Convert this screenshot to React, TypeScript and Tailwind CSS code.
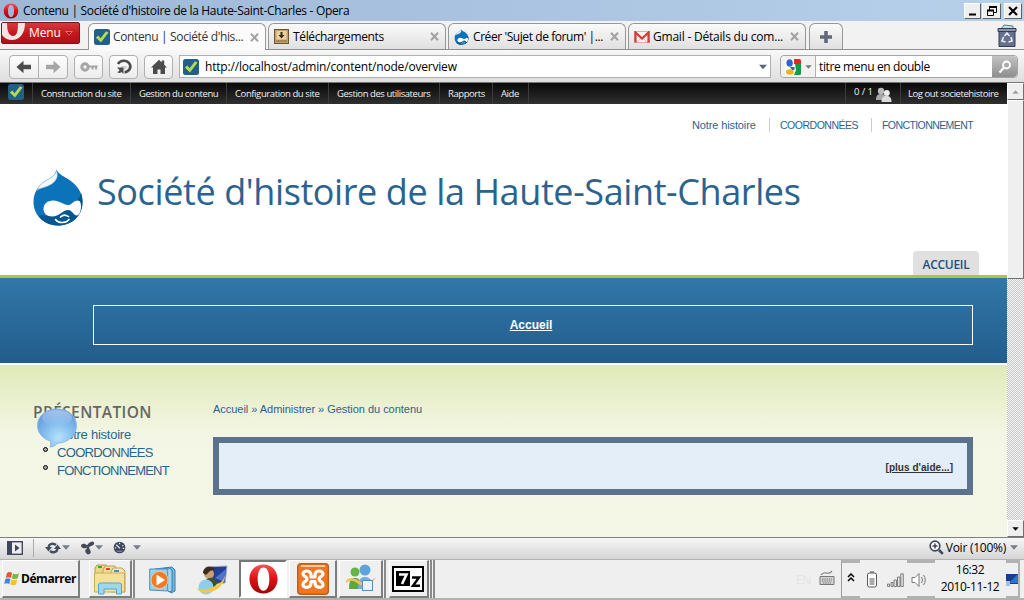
import React from 'react';

type IconProps = { className?: string };

const ui = "font-['Open_Sans','Noto_Sans',sans-serif]";
const arial = "font-['Liberation_Sans',Arial,sans-serif]";

function OperaLogo({ className }: IconProps) {
  return (
    <svg viewBox="0 0 32 32" className={className}>
      <defs>
        <linearGradient id="opera" x1="0" y1="0" x2="0" y2="1">
          <stop offset="0" stopColor="#f0564f" />
          <stop offset=".5" stopColor="#e00f14" />
          <stop offset="1" stopColor="#9c0508" />
        </linearGradient>
      </defs>
      <path
        fillRule="evenodd"
        fill="url(#opera)"
        d="M16 1C7 1 1.500 8 1.500 16S7 31 16 31s14.500-7 14.500-15S25 1 16 1Zm0 3c4 0 6 5 6 12s-2 12-6 12-6-5-6-12 2-12 6-12Z"
      />
    </svg>
  );
}

function CheckIcon({ className }: IconProps) {
  return (
    <svg viewBox="0 0 16 16" className={className}>
      <rect width="16" height="16" rx="2.500" fill="#225f8b" />
      <path d="M1.800 8.500 4.400 6.500l2.200 2.700L12 2.200l2.600 1.200L7 13.500Z" fill="#b2dc4c" />
    </svg>
  );
}

function DrupalDrop({ className }: IconProps) {
  return (
    <svg viewBox="0 0 50 57" className={className}>
      <path
        d="M23.500.5c2.500 5.500 8 7 13 10.500C45 17 49.500 24 49.500 33 49.500 47 39 56.500 25 56.500S.5 46 .5 33C.5 23 6 15.500 14 11c5-3 9-5.500 9.500-10.500Z"
        fill="#0a73ba"
      />
      <path d="M48 24c-1 5-5 9-11 11.500L22 45c-4 3-9 2-13 1l-3 1c4 6 11 9.500 19 9.500 14 0 24.500-9.500 24.500-23.500 0-4-.5-6-1.500-9Z" fill="#045590" />
      <path d="M23.300 1.500C26 7 24 13 15 17 9 19.500 5 19.500 4 22 6 16 9.500 13.500 14 11c5-3 9-5.500 9.300-9.500Z" fill="#f2f8fc" stroke="#7aa9c9" strokeWidth=".5" />
      <path
        d="M10.500 40c0-5 4-8.500 9.500-8.500 7 0 11 5 15.500 4.500 4-.5 5-4.500 9-4.500 3 0 3.500 3 3.500 6 0 5-2 9-4 9-3.500 0-5-5.500-9-5.500-5 0-8.500 6.500-16 6.500-5 0-8.500-3-8.500-7.500Z"
        fill="#fff"
      />
      <path d="M27.500 48c4-4 6-1 8-.5M22.500 50.500c3 4.500 11 3.500 13.500 0" fill="none" stroke="#fff" strokeWidth="1.600" strokeLinecap="round" />
    </svg>
  );
}

function DownloadIcon() {
  return (
    <svg viewBox="0 0 15 15" className="size-[15px]">
      <rect x=".5" y=".5" width="14" height="14" fill="#c8a26b" stroke="#6d5330" />
      <rect x="2.500" y="2" width="10" height="8.500" fill="#ead1a0" />
      <path d="M6.500 3h2v3h2L7.500 9.500 4.500 6h2Z" fill="#3b2a12" />
      <path d="M2 12h11" stroke="#8a6c40" strokeWidth="1" />
    </svg>
  );
}

function GmailIcon() {
  return (
    <svg viewBox="0 0 16 12" className="h-3 w-4">
      <rect x=".5" y=".5" width="15" height="11" fill="#fdf3f1" stroke="#e9aaa4" />
      <path d="M3 11 8 6l5 5" fill="none" stroke="#eab5b0" />
      <path d="M1.500 11.500V1.500L8 7.500l6.500-6v10" fill="none" stroke="#d63a36" strokeWidth="2.200" />
    </svg>
  );
}

function Cross() {
  return (
    <svg viewBox="0 0 9 9" className="size-[9px]">
      <path d="m1 .8 7 7.400M8 .8 1 8.200" stroke="#a2a2a2" strokeWidth="2" />
    </svg>
  );
}

function Caret({ className }: IconProps) {
  return (
    <svg viewBox="0 0 8 5" className={className}>
      <path d="M0 .3h8L4 4.800Z" fill="currentColor" />
    </svg>
  );
}

function TitleBar() {
  const button = 'flex h-4 items-center justify-center border border-t-[#fff] border-l-[#fff] border-r-[#606060] border-b-[#606060] bg-[#efefef]';
  return (
    <header className="flex h-[21px] items-center bg-linear-to-r from-[#9db7d7] to-[#b7d0ea] pl-[3px] pr-0.5">
      <OperaLogo className="size-4" />
      <h1 className="ml-1 flex-1 text-[12px] tracking-[-0.32px] whitespace-nowrap text-black">
        Contenu | Société d'histoire de la Haute-Saint-Charles - Opera
      </h1>
      <div className={`${button} w-[17px]`}>
        <svg viewBox="0 0 12 12" className="size-3"><path d="M2 9.500h7" stroke="#000" strokeWidth="2" /></svg>
      </div>
      <div className={`${button} ml-px w-[19px]`}>
        <svg viewBox="0 0 12 12" className="size-3">
          <path d="M3.500 5V1.500h7v6H8" fill="none" stroke="#000" />
          <path d="M3 2h8M1 5.500h7" stroke="#000" strokeWidth="1.800" />
          <path d="M1.500 5.500h6v5h-6Z" fill="none" stroke="#000" />
        </svg>
      </div>
      <div className={`${button} ml-[3px] w-[18px]`}>
        <svg viewBox="0 0 12 12" className="size-3"><path d="m2 2 8 8M10 2l-8 8" stroke="#000" strokeWidth="2" /></svg>
      </div>
    </header>
  );
}

type TabProps = { icon: React.ReactNode; label: string; active?: boolean; className: string };

function Tab({ icon, label, active, className }: TabProps) {
  return (
    <div
      className={`flex items-center rounded-t-md border border-[#979797] pr-[6px] pl-[5px] ${
        active ? 'h-[27px] border-b-0 bg-[#fbfbfb] text-[#333]' : 'h-[26px] border-b-0 bg-linear-to-b from-[#fafafa] to-[#e0e0e0] text-black'
      } ${className}`}
    >
      <span className="flex w-[19px] shrink-0 items-center">{icon}</span>
      <span className="flex-1 text-[12px] whitespace-nowrap">{label}</span>
      <Cross />
    </div>
  );
}

function TabBar() {
  return (
    <nav className="flex h-[29px] items-end border-b border-[#909090] bg-[#f2f2f2]">
      <div className="mr-2 mb-[5px] ml-px flex h-[22px] w-[79px] items-center overflow-hidden rounded-[2px] border border-[#7d1518] bg-linear-to-b from-[#d8383c] via-[#c5171d] to-[#ae1118] text-white">
        <svg viewBox="0 0 26 20" className="h-5 w-[26px]">
          <path d="M0 0h5c0 8 2 13 6 13s5-5 5-13h7c0 10-5 17-13 17-4 0-8-2-10-5Z" fill="#f0e4e4" />
        </svg>
        <span className="ml-px text-[12px] tracking-[-0.1px]">Menu</span>
        <svg viewBox="0 0 8 5" className="ml-1 h-[5px] w-2"><path d="M.7.5h6.600L4 4.300Z" fill="#a81218" stroke="#e08a8c" strokeWidth=".8" /></svg>
      </div>
      <Tab active className="-mb-px w-[178px] tracking-[-0.36px]" icon={<CheckIcon className="size-4" />} label="Contenu | Société d'his..." />
      <Tab className="ml-0.5 w-[178px] tracking-[-0.36px]" icon={<DownloadIcon />} label="Téléchargements" />
      <Tab className="ml-0.5 w-[178px] tracking-[-0.42px]" icon={<DrupalDrop className="h-4 w-[15px]" />} label="Créer 'Sujet de forum' |..." />
      <Tab className="ml-0.5 w-[178px] tracking-[-0.21px]" icon={<GmailIcon />} label="Gmail - Détails du com..." />
      <div className="ml-[3px] flex h-[26px] w-[34px] items-center justify-center rounded-t-md border border-b-0 border-[#979797] bg-linear-to-b from-[#fafafa] to-[#e0e0e0]">
        <svg viewBox="0 0 12 12" className="size-3"><path d="M6 0v12M0 6h12" stroke="#62677a" strokeWidth="3.600" /></svg>
      </div>
      <svg viewBox="0 0 20 24" className="mr-[7px] mb-px ml-auto h-6 w-5">
        <path d="m4 5 3-4 9 1v5H4Z" fill="#bfe0dc" stroke="#55808a" />
        <path d="M1 4.500h18v3H1Z" fill="#8b96ad" stroke="#343d55" />
        <path d="M2 7.500h16V22.500H2Z" fill="#66728d" stroke="#343d55" />
        <path d="m7.500 12 2.500-3 2.500 3M14 13l1 4-3.500 1M8.500 18 5 17l1.500-4" fill="none" stroke="#e5ebf4" strokeWidth="1.700" />
      </svg>
    </nav>
  );
}

function Toolbar() {
  const button = 'flex h-6 items-center justify-center border border-[#b0b0b0] bg-linear-to-b from-[#fefefe] to-[#ececec]';
  return (
    <div className="flex h-[33px] items-start border-b border-[#777] bg-linear-to-b from-[#f8f8f8] to-[#dedede] pt-[5px] pl-[9px]">
      <div className={`${button} w-[30px] rounded-l`}>
        <svg viewBox="0 0 16 14" className="h-3.5 w-4"><path d="M.5 7 7.500.8v4h7.500v4.400H7.500v4Z" fill="#4c4c4c" /></svg>
      </div>
      <div className={`${button} -ml-px w-[30px] rounded-r`}>
        <svg viewBox="0 0 16 14" className="h-3.5 w-4"><path d="M15.500 7 8.500.8v4H1v4.400h7.500v4Z" fill="#a6a6a6" /></svg>
      </div>
      <div className={`${button} ml-1.5 w-[29px] rounded`}>
        <svg viewBox="0 0 18 12" className="h-3 w-[18px]">
          <circle cx="5" cy="6" r="3.200" fill="none" stroke="#a5a5a5" strokeWidth="3" />
          <path d="M8 5.500h9.500M12.500 5.500v3M16 5.500v3" stroke="#a5a5a5" strokeWidth="2" fill="none" />
        </svg>
      </div>
      <div className={`${button} ml-1.5 w-[29px] rounded`}>
        <svg viewBox="0 0 18 18" className="size-[18px]">
          <path d="M3 6A6.500 5.800 0 1 1 9.500 14.300" fill="none" stroke="#4c4c4c" strokeWidth="2.600" />
          <path d="M6 8h6c0 3-3 4.500-5 2.500Z" fill="#cfcfcf" />
          <path d="M2 9.500h6.500v6.500l-2-2q-2 2-4.500 0 2 0 2.500-2Z" fill="#4c4c4c" />
        </svg>
      </div>
      <div className={`${button} ml-1.5 w-[29px] rounded`}>
        <svg viewBox="0 0 16 16" className="size-4">
          <path d="M0 8.500 8 .8l2.700 2.600V1.500h2.500v4.300L16 8.500h-2V15H9.500v-4.500h-3V15H2V8.500Z" fill="#4c4c4c" />
        </svg>
      </div>
      <div className="ml-1.5 flex h-[23px] w-[592px] items-center border border-[#b0b0b0] bg-white pr-[3px] pl-[3px]">
        <CheckIcon className="size-4" />
        <span className="ml-[6px] flex-1 text-[12px] tracking-[-0.19px] text-black">http://localhost/admin/content/node/overview</span>
        <Caret className="h-[6px] w-2 text-[#5c6678]" />
      </div>
      <div className="ml-[9px] flex h-[23px] w-[238px] items-center rounded border border-[#a5a5a5] bg-white">
        <div className="flex h-full w-[35px] shrink-0 items-center rounded-l border-r border-[#b0b0b0] bg-[#f2f2f2] pl-1">
          <svg viewBox="0 0 16 16" className="size-4">
            <rect width="16" height="16" fill="#fff" />
            <path d="M9 0h5.500q1.500 0 1.500 1.500V5H9Z" fill="#e02a20" />
            <path d="M10 5h6v9.500q0 1.500-1.500 1.500H9l2-5Z" fill="#159a46" />
            <ellipse cx="4.600" cy="4" rx="3.200" ry="3.800" fill="#2d66c8" />
            <path d="M5 8h4.500v3H7Z" fill="#2d66c8" />
            <ellipse cx="4.800" cy="13" rx="4" ry="2.800" fill="#f3b41b" />
          </svg>
          <Caret className="ml-1 h-1 w-[7px] text-[#777]" />
        </div>
        <span className="flex-1 pl-[3px] text-[12px] tracking-[-0.37px] whitespace-nowrap text-black">titre menu en double</span>
        <div className="flex h-full w-[25px] items-center justify-center rounded-r bg-linear-to-b from-[#c4c4c4] to-[#8d8d8d]">
          <svg viewBox="0 0 14 14" className="size-3.5">
            <circle cx="8.500" cy="5" r="3.500" fill="none" stroke="#fff" strokeWidth="1.800" />
            <path d="m6 7.500-4.500 5" stroke="#fff" strokeWidth="2.200" />
          </svg>
        </div>
      </div>
    </div>
  );
}

function AdminBar() {
  const item = 'flex h-full shrink-0 items-center border-l border-[#3c3c3c] pt-px pl-2';
  return (
    <div className="flex h-[21px] items-center bg-linear-to-b from-[#0a0a0a] to-[#303030] pl-2 text-[9.500px] tracking-[-0.44px] whitespace-nowrap text-[#f0f0f0]">
      <CheckIcon className="mb-1 size-4" />
      <div className={`${item} ml-2 w-[98px]`}>Construction du site</div>
      <div className={`${item} w-24`}>Gestion du contenu</div>
      <div className={`${item} w-[102px] tracking-[-0.4px]`}>Configuration du site</div>
      <div className={`${item} w-[111px]`}>Gestion des utilisateurs</div>
      <div className={`${item} w-[53px]`}>Rapports</div>
      <div className={`${item} w-9`}>Aide</div>
      <div className={`${item} mr-auto`} />
      <div className={`${item} w-[55px]`}>
        <span className="mb-1 w-[22px] tracking-[-0.1px]">0 / 1</span>
        <svg viewBox="0 0 16 15" className="h-[15px] w-4">
          <circle cx="5" cy="4" r="3.200" fill="#b9b9b9" />
          <path d="M0 13c0-5 2-6 5-6s5 1 5 6Z" fill="#a8a8a8" />
          <circle cx="10.800" cy="6" r="3" fill="#eee" />
          <path d="M5.500 15c0-5 2-6 5-6s5 1 5 6Z" fill="#ddd" />
        </svg>
      </div>
      <div className={`${item} w-[107px] pl-[7px]`}>Log out societehistoire</div>
    </div>
  );
}

function SiteHeader() {
  return (
    <div className="flex h-[174px] flex-col border-b-3 border-[#a8c843] bg-white">
      <div className={`mt-3.5 mr-[34px] flex h-[14px] items-center self-end text-[11px] leading-[14px] whitespace-nowrap text-[#2b638f] ${arial}`}>
        <span className="w-[77px] tracking-[-0.12px]">Notre histoire</span>
        <span className="w-[102px] border-l border-[#ccc] pl-2.5 text-[10.500px] tracking-[-0.48px]">COORDONNÉES</span>
        <span className="w-[102px] border-l border-[#ccc] pl-2.5 text-[10.500px] tracking-[-0.58px]">FONCTIONNEMENT</span>
      </div>
      <div className="mt-[36px] flex h-[58px] items-center pl-[33px]">
        <DrupalDrop className="h-[57px] w-[50px]" />
        <span className="mb-[11px] ml-3.5 text-[36px] leading-[44px] tracking-[-0.4px] whitespace-nowrap text-[#2b638f]">
          Société d'histoire de la Haute-Saint-Charles
        </span>
      </div>
      <div className="mt-auto mr-7 flex h-6 w-[66px] items-center justify-center self-end rounded-t bg-[#e0e0e0] pt-1 text-[12px] font-semibold tracking-[-0.28px] text-[#1f4f7a]">
        ACCUEIL
      </div>
    </div>
  );
}

function Content() {
  const link = 'flex h-[18px] items-center pl-6';
  return (
    <div className={`flex h-[172px] border-t-0 bg-linear-to-b from-[#e0eab8] via-[#f3f6e4] via-40% to-[#f4f7e6] pl-[33px] text-[#2b638f] ${arial}`}>
      <aside className="w-[180px] pt-[37px]">
        <div className="relative">
          <h2 className="h-[24px] font-['Open_Sans',sans-serif] text-[15.500px] leading-[21px] font-semibold tracking-[0.38px] text-[#666]">PRÉSENTATION</h2>
          <ul className="text-[13px] whitespace-nowrap">
            <li className={`${link} tracking-[-0.24px]`}>Notre histoire</li>
            <li className={`${link} relative tracking-[-0.68px]`}>
              <i className="absolute top-[3px] left-2.5 size-[5px] rounded-full border border-black bg-[#aaa]" />
              COORDONNÉES
            </li>
            <li className={`${link} relative tracking-[-0.78px]`}>
              <i className="absolute top-[3px] left-2.5 size-[5px] rounded-full border border-black bg-[#aaa]" />
              FONCTIONNEMENT
            </li>
          </ul>
          <svg viewBox="0 0 42 40" className="absolute top-[6px] left-[3px] h-10 w-[42px]">
            <defs>
              <radialGradient id="bubble" cx=".55" cy=".75" r=".75">
                <stop offset="0" stopColor="#b6e3fb" />
                <stop offset=".5" stopColor="#84bdee" />
                <stop offset="1" stopColor="#6398dc" />
              </radialGradient>
              <linearGradient id="gloss" x1="0" y1="0" x2="0" y2="1">
                <stop offset="0" stopColor="#fff" stopOpacity=".4" />
                <stop offset="1" stopColor="#fff" stopOpacity="0" />
              </linearGradient>
            </defs>
            <path d="M21 1c11 0 19.500 7 19.500 16.500S32 35 22 35c-2 2-5 4-8 4 1-2 1-4 .5-6C7 31 1.500 25 1.500 17.500 1.500 8 10 1 21 1Z" fill="url(#bubble)" stroke="#8db8e6" />
            <ellipse cx="21" cy="10" rx="15" ry="8" fill="url(#gloss)" />
          </svg>
        </div>
      </aside>
      <main className="w-[760px] pt-[37px]">
        <div className="h-[35px] text-[11px] leading-[14px] tracking-[-0.03px]">Accueil » Administrer » Gestion du contenu</div>
        <div className="flex h-[58px] items-center justify-end border-6 border-[#5a728a] bg-[#e4eef8] pt-0.5 pr-3.5">
          <a className="text-[10px] font-bold tracking-[0.04px] text-[#333] underline">[plus d'aide...]</a>
        </div>
      </main>
    </div>
  );
}

function Scrollbar() {
  const bevel = 'border border-t-[#fff] border-l-[#fff] border-r-[#707070] border-b-[#707070] bg-[#efefef]';
  return (
    <div className="flex w-[17px] flex-col bg-[repeating-conic-gradient(#c9c9c9_0_25%,#f4f4f4_0_50%)] bg-size-[2px_2px]">
      <div className={`flex h-[17px] items-center justify-center ${bevel}`}>
        <Caret className="h-1 w-[7px] rotate-180 text-[#a0a0a0]" />
      </div>
      <div className={`h-[179px] ${bevel}`} />
      <div className={`mt-auto flex h-[17px] items-center justify-center ${bevel}`}>
        <Caret className="h-1 w-[7px] text-black" />
      </div>
    </div>
  );
}

function StatusBar() {
  return (
    <div className="flex h-[22px] items-center border-t border-[#808080] bg-linear-to-b from-[#f7f7f7] to-[#d5d5d5] pb-0.5 pl-[7px] text-[#777e8c]">
      <svg viewBox="0 0 16 14" className="h-3.5 w-4">
        <rect x=".7" y=".7" width="14.600" height="12.600" fill="#eee" stroke="#3f465e" strokeWidth="1.400" />
        <path d="M0 0h5v14H0ZM8 3.500 12.500 7 8 10.500Z" fill="#3f465e" />
      </svg>
      <div className="ml-2.5 h-[18px] w-px bg-[#aaa]" />
      <svg viewBox="0 0 16 14" className="ml-[11px] h-3.5 w-4">
        <path d="M3.500 6C4 3 8 1.500 11 4M12.500 8c-.5 3-4.500 4.500-7.500 2" fill="none" stroke="#454c60" strokeWidth="2.400" />
        <path d="M0 6h7L3.500 10.500ZM9 8h7l-3.500-4.500Z" fill="#454c60" />
      </svg>
      <Caret className="ml-px h-[5px] w-2" />
      <svg viewBox="0 0 14 14" className="ml-[11px] h-3.5 w-3.5">
        <g fill="#444a58">
          <ellipse cx="3" cy="5" rx="3" ry="2.200" transform="rotate(15 3 5)" />
          <ellipse cx="10" cy="3" rx="3.300" ry="2" transform="rotate(-25 10 3)" />
          <ellipse cx="7" cy="10.500" rx="3" ry="2.500" transform="rotate(60 7 10.500)" />
          <path d="M4 5c2 2 2 3 2 5l3-1c-2-3 0-4 2-6L8 3Z" />
        </g>
      </svg>
      <Caret className="h-[5px] w-2" />
      <svg viewBox="0 0 14 14" className="ml-2.5 size-[13px]">
        <circle cx="7" cy="7" r="6.300" fill="#3f465e" />
        <path d="m3.500 4 4 4M7 2v1.500M11 4.500l-1 .8M2 7.500h1.500M12 8h-1.500" stroke="#e6e9ef" strokeWidth="1.300" />
        <path d="M4 11h6" stroke="#9298a7" />
      </svg>
      <Caret className="ml-[7px] h-[5px] w-2" />
      <div className="mr-[6px] ml-auto flex items-center">
        <svg viewBox="0 0 15 15" className="size-[15px]">
          <circle cx="6" cy="6" r="4.800" fill="#fff" stroke="#3f465e" strokeWidth="1.700" />
          <path d="M6 3.500v5M3.500 6h5" stroke="#3f465e" strokeWidth="1.500" />
          <path d="m10 10 3.800 3.800" stroke="#3f465e" strokeWidth="2.600" />
        </svg>
        <span className="mr-1 ml-0.5 text-[12px] tracking-[-0.25px] whitespace-nowrap text-black">Voir (100%)</span>
        <Caret className="h-[5px] w-2" />
      </div>
    </div>
  );
}

function StackEdge() {
  return <div className="h-[38px] w-[3px] border-r-2 border-[#8a8a8a] bg-[#f4f4f4]" />;
}

function Taskbar() {
  const raised = 'flex h-[38px] items-center justify-center border-t border-l border-r-2 border-b-2 border-t-[#fff] border-l-[#fff] border-r-[#7d7d7d] border-b-[#7d7d7d] bg-[#efefef]';
  return (
    <footer className="flex h-[41px] items-start border-t border-b-2 border-[#b2b2b2] bg-[#efefef] pl-0.5">
      <div className={`${raised} w-[78px] pr-px text-[12px] font-bold text-black`}>
        <svg viewBox="0 0 16 15" className="mr-px h-[15px] w-4">
          <path d="M3 2c2-1.500 3.500-1 5 0L6.800 7c-2-1-3-1-5-.2Z" fill="#e8542c" />
          <path d="M9 2.500c2 1 4 1 6-.2l-1.300 5c-2 1-4 1-6 0Z" fill="#7bb83d" />
          <path d="M1.500 7.800c2-1 3.500-.8 5 .2l-1.300 5c-2-1-3-1-5 0Z" fill="#3f85d8" />
          <path d="M7.500 8.500c2 1 3.700.8 5.800 0L12 13.500c-2 1-4 .8-5.800-.2Z" fill="#f6c12b" />
        </svg>
        <span className="tracking-[-0.42px]">Démarrer</span>
      </div>
      <div className={`${raised} ml-[9px] w-[43px]`}>
        <svg viewBox="0 0 34 32" className="h-8 w-[34px]">
          <path d="M2 5 4 2h9l1 3v23H2Z" fill="#ecd68a" stroke="#b89a48" />
          <path d="m10 7 2-4h10l2 4v21H10Z" fill="#f3df98" stroke="#c1a350" />
          <path d="m18 9 2-4h9l3 3v21H18Z" fill="#f6e6a9" stroke="#c1a350" />
          <path d="M1.500 10h30v19h-30Z" fill="#f4e099" stroke="#c8ad5d" />
          <path d="M5 3h4v2H5Z" fill="#3aa640" />
          <path d="M13 5h4v2h-4Z" fill="#d9482f" />
          <path d="M21 7h5v2h-5Z" fill="#438fcb" />
          <path d="M5.500 31v-9q0-2 2-2h19q2 0 2 2v9h-5v-5H11v5Z" fill="#9fd8ee" stroke="#4fa9cf" />
        </svg>
      </div>
      <StackEdge />
      <svg viewBox="0 0 30 28" className="mt-1.5 ml-3.5 h-7 w-[30px]">
        <path d="m6 3 17-2 3 3v21l-4 2Z" fill="#6fb7df" stroke="#3a7dac" />
        <path d="m3 4 17-2 3 2v21l-3 1Z" fill="#a5d8f0" stroke="#3a7dac" />
        <path d="M.7 3h18v22l-18-1Z" fill="#9bd0ec" stroke="#4a8ebc" />
        <circle cx="10.500" cy="14" r="8.500" fill="#f07a21" stroke="#fbc08a" />
        <path d="m7.500 8.500 8.500 5.500-8.500 5.500Z" fill="#fff" />
      </svg>
      <svg viewBox="0 0 34 30" className="mt-[5px] ml-4 h-[30px] w-[34px]">
        <path d="m11 2 21-1-2 17-17 1Z" fill="#233f92" stroke="#9aa9c5" />
        <path d="m20 13 11-9-1.500 13Z" fill="#4e75cc" />
        <circle cx="14" cy="9" r="5" fill="#caa070" />
        <path d="M8 8c0-7 9-8 12-4l-5 2-4 4Z" fill="#3a2b20" />
        <path d="M9 19c2-8 12-8 14-1l-6 6Z" fill="#3d5137" />
        <circle cx="11" cy="22" r="7.500" fill="#8fcdec" />
        <path d="M1 23c6 5 25-1 29-12-1 15-22 22-29 12Z" fill="#f4c93a" />
      </svg>
      <div className="ml-2.5 flex h-[38px] w-12 items-center justify-center border-2 border-t-[#777] border-r-[#fff] border-b-[#fff] border-l-[#777] bg-white">
        <OperaLogo className="h-8 w-[31px]" />
      </div>
      <div className={`${raised} ml-0.5 w-12`}>
        <svg viewBox="0 0 32 32" className="size-8">
          <rect x=".7" y=".7" width="30.600" height="30.600" rx="3" fill="#ef7622" stroke="#b9601f" strokeWidth="1.400" />
          <path d="M4 3h24" stroke="#fac79f" strokeWidth="2" />
          <path
            d="M14 12.500c0-6-8-5.500-8-1.500 0 3 4 2 4 5s-4 2-4 5.500c0 4 8 4 8-1.500v-1.500h4V20c0 5.500 8 5.500 8 1.500 0-3.500-4-2.500-4-5.500s4-2 4-5c0-4-8-4.500-8 1.500V14h-4Z"
            fill="none"
            stroke="#fff"
            strokeWidth="3.200"
            strokeLinejoin="round"
          />
        </svg>
      </div>
      <div className={`${raised} ml-0.5 w-11`}>
        <svg viewBox="0 0 32 30" className="h-[30px] w-8">
          <circle cx="10" cy="8" r="4.500" fill="#67b447" />
          <path d="M4 25c0-9 2-11 6-11s6 2 6 11Z" fill="#5aa83f" />
          <circle cx="20" cy="6" r="5.500" fill="#5ea4db" />
          <path d="M13 25c0-10 3-12 7-12s8 2 8 12Z" fill="#6db0e2" />
          <path d="M1 19c-1-6 8-6 13-2 5 4 10 2 17-4-4 8-13 11-19 6-4-3-7-3-11 0Z" fill="#f0c257" />
          <rect x="17.500" y="16.500" width="10" height="10" fill="#e9f3fc" stroke="#5a8cc0" />
        </svg>
      </div>
      <StackEdge />
      <div className={`${raised} ml-[3px] w-10 pr-px`}>
        <svg viewBox="0 0 32 26" className="h-[26px] w-8">
          <rect x="1" y="1" width="30" height="24" fill="#fff" stroke="#000" strokeWidth="2" />
          <rect x="4" y="5" width="14" height="15" fill="#000" />
          <path d="M7 8.500h7.500L10 18" fill="none" stroke="#fff" strokeWidth="2.600" />
          <path d="M20 11.500h7l-6 8.200h7" fill="none" stroke="#000" strokeWidth="2.400" />
        </svg>
      </div>
      <StackEdge />
      <StackEdge />
      <div className="ml-auto flex h-[39px] items-center">
        <span className="text-[12px] tracking-[-0.3px] text-[#e4e4e4]">EN</span>
        <svg viewBox="0 0 16 16" className="mb-1 ml-2 size-4">
          <path d="M1 6.500h14v8H1Z" fill="#d5d5d5" stroke="#777" />
          <path d="M3 9h10M3 11h10M4 13h8" stroke="#777" strokeDasharray="1.500 .8" />
          <path d="M2 5c4-6 7 2 11-4" fill="none" stroke="#777" strokeWidth="1.200" />
        </svg>
        <div className="ml-1.5 flex h-[39px] w-[19px] items-center border-y-3 border-l border-y-[#b2b2b2] border-l-[#999] pb-1 pl-[5px]">
          <svg viewBox="0 0 8 9" className="h-[9px] w-2"><path d="m1 4 3-3 3 3M1 8l3-3 3 3" fill="none" stroke="#000" strokeWidth="1.500" /></svg>
        </div>
        <svg viewBox="0 0 12 17" className="ml-1.5 h-[17px] w-3">
          <rect x="1.500" y="2" width="9" height="14" rx="2" fill="#fff" stroke="#555" />
          <path d="M4 1h4" stroke="#555" />
          <path d="M3.500 7h5v7h-5Z" fill="#aaa" />
        </svg>
        <svg viewBox="0 0 17 14" className="ml-[9px] h-3.5 w-[17px]">
          <g fill="#e2e2e2" stroke="#777" strokeWidth=".9">
            <path d="M.5 11h2v2.500h-2ZM4 9.500h2v4H4ZM7 7h2.500v6.500H7ZM10.500 4H13v9.500h-2.500ZM13.800.8h2.500v12.700h-2.500Z" />
          </g>
        </svg>
        <div className="ml-[3px] flex h-[39px] w-7 items-center border-y-3 border-[#b2b2b2] pl-1">
          <svg viewBox="0 0 16 16" className="size-4">
            <path d="M1 5.500h3L8 1.500v13l-4-4H1Z" fill="#fff" stroke="#777" />
            <path d="M10.500 5q2 3 0 6M12.500 3q3.500 5 0 10" fill="none" stroke="#777" />
          </svg>
        </div>
        <div className="ml-[5px] w-[60px] pb-1 text-center text-[12px] leading-[17px] tracking-[-0.4px] whitespace-nowrap text-black">
          <div>16:32</div>
          <div>2010-11-12</div>
        </div>
        <div className="mr-1 ml-1.5 flex h-[39px] w-3.5 items-center border-y-3 border-r-2 border-[#b2b2b2]">
          <svg viewBox="0 0 12 12" className="size-3">
            <path d="M0 0h12v10H0Z" fill="#173f8c" />
            <path d="m3 9 9-9v9Z" fill="#2c74cb" />
            <path d="M0 7h4v5H0Z" fill="#9fc1e5" />
          </svg>
        </div>
      </div>
    </footer>
  );
}

export default function App() {
  return (
    <div className={`flex h-[600px] w-[1024px] flex-col overflow-hidden ${ui}`}>
      <TitleBar />
      <TabBar />
      <Toolbar />
      <div className="flex h-[454px]">
        <div className="w-[1007px]">
          <AdminBar />
          <SiteHeader />
          <div className="flex h-[87px] items-center border-b-2 border-white bg-linear-to-b from-[#3177a8] to-[#225d8c] pt-[11px] pl-[93px]">
            <div className={`mb-[3px] flex h-10 w-[880px] items-center justify-center border border-white pr-1 text-[12px] font-bold text-white underline ${arial}`}>
              Accueil
            </div>
          </div>
          <Content />
        </div>
        <Scrollbar />
      </div>
      <StatusBar />
      <Taskbar />
    </div>
  );
}
